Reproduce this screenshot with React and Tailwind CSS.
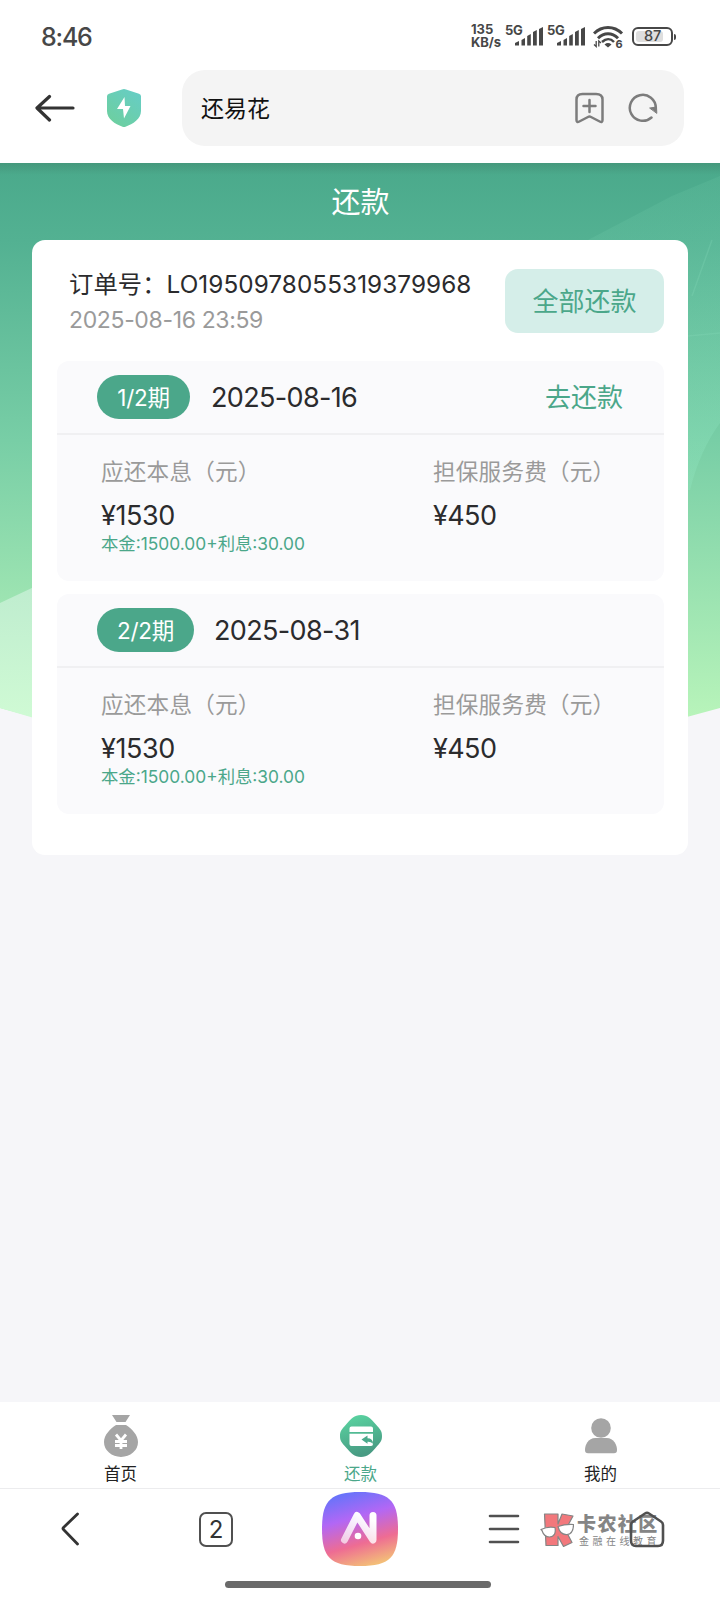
import { useState } from "react";

const periods = [
    { id: 1, label: "1/2期", date: "2025-08-16", canPay: true, amount: "1530", fee: "450", detail: "本金:1500.00+利息:30.00" },
    { id: 2, label: "2/2期", date: "2025-08-31", canPay: false, amount: "1530", fee: "450", detail: "本金:1500.00+利息:30.00" },
];

function Signal() {
    return (
        <div className="flex h-[20px]">
            <span className="text-[13px] leading-[11px] font-bold tracking-[-0.4px] w-[17px] h-[11px] -mt-[1px]">5G</span>
            <svg width="28" height="20" viewBox="0 0 28 20" className="-ml-[7px]" fill="#474747">
                <path d="M0 19.500V17l4-2v4.500zM6.500 19.500V14l3.500-2v7.500zM12.200 19.500V10l3.600-2v11.500zM18 19.500V6l3.800-2v15.500zM24 19.500V3l4-2v18.500z" />
            </svg>
        </div>
    );
}

function StatusBar() {
    return (
        <div className="h-[70px] pl-[41px] pr-[44px] pt-[24px] flex justify-between text-[#474747]">
            <span className="text-[25px] leading-[26px] font-medium tracking-[-1.200px]">8:46</span>
            <div className="flex items-start">
                <div className="w-[33px] -mt-[1px] text-[13px] leading-[13px] font-bold">
                    <div>135</div>
                    <div className="tracking-[-0.1px]">KB/s</div>
                </div>
                <div className="ml-[1px] mt-[2px] flex gap-[4px]">
                    <Signal />
                    <Signal />
                </div>
                <svg width="32" height="28" viewBox="0 0 32 28" className="ml-[8px] mt-[1px] -mr-[2px]" fill="none" stroke="#474747" strokeWidth="3">
                    <path d="M1 8.500C9 0.500 21 0.500 29 8.500" />
                    <path d="M5 13.200C11 7.300 19 7.300 25 13.200" />
                    <path d="M9 17C13 13.300 17.500 13.300 21 17" strokeWidth="2.500" />
                    <path d="M11.500 19.500q3.500-2.800 7 0l-3.500 3z" fill="#474747" stroke="none" />
                    <path d="M3.200 16v5.500L1 19.500M5.800 21.500V16l2.200 2" strokeWidth="1.300" />
                    <text x="22.500" y="22.700" fontSize="11" fontWeight="700" fill="#474747" stroke="none">6</text>
                </svg>
                <div className="ml-[9px] mt-[3px] flex items-center">
                    <div className="relative w-[41px] h-[19px] rounded-[6px] border-2 border-[#474747] flex items-center justify-center">
                        <div className="absolute left-[2px] top-[2px] bottom-[2px] w-[27px] rounded-[3px] bg-[#dedede]"></div>
                        <span className="relative text-[14.5px] leading-none font-medium tracking-[-0.3px]">87</span>
                    </div>
                    <div className="w-[2px] h-[6px] ml-[1px] rounded-r bg-[#474747]"></div>
                </div>
            </div>
        </div>
    );
}

function AddressBar() {
    return (
        <div className="h-[93px] pl-[35px] pr-[36px] flex items-start">
            <svg width="40" height="28" viewBox="0 0 40 28" className="mt-[24px]" fill="none" stroke="#333" strokeWidth="3.200" strokeLinecap="round" strokeLinejoin="round">
                <path d="M38 14H2.500M14.500 2.500L2 14l12.500 12" />
            </svg>
            <svg width="36" height="40" viewBox="0 0 36 40" className="ml-[31px] mt-[18px]">
                <defs>
                    <linearGradient id="shield" x1="1" y1="0" x2="0.300" y2="1">
                        <stop offset="0" stopColor="#66cdc8" />
                        <stop offset="1" stopColor="#6dcfa0" />
                    </linearGradient>
                </defs>
                <path d="M16 1.400q2-.9 4 0L33 5.800q2 .7 2 2.500V23c0 8-8 13-15.500 15.700q-1.500.5-3 0C9 36 1 31 1 23V8.300q0-1.800 2-2.500z" fill="url(#shield)" />
                <path d="M18.500 9L11 21h6l1 9.500L24.500 18H19z" fill="#fff" />
            </svg>
            <div className="ml-[40px] w-[502px] h-[76px] rounded-[23px] bg-[#f4f4f4] flex items-center pl-[19px] pr-[26px]">
                <span className="grow text-[23px] leading-none text-[#111] pt-[2px]">还易花</span>
                <svg width="29" height="32" viewBox="0 0 29 32" fill="none" stroke="#7c7c7c" strokeWidth="2.500" strokeLinecap="round" strokeLinejoin="round" className="mr-[-1px]">
                    <path d="M7.500 2h13.500Q27.500 2 27.500 7.500V28q0 3-2.800 1.500L16 25q-1.500-.8-3 0L4.300 29.500Q1.500 31 1.500 28V7.500Q1.500 2 7.500 2z" />
                    <path d="M14.500 8v12M8.500 14h12" />
                </svg>
                <svg width="30" height="30" viewBox="0 0 30 30" className="ml-[25px]" fill="none" stroke="#7c7c7c" strokeWidth="2.500" strokeLinecap="round">
                    <path d="M23.500 24.500A13 13 0 1 1 27.800 15" />
                    <path d="M22 15l6.500-1 .3 6z" fill="#7c7c7c" strokeWidth="1" strokeLinejoin="round" />
                </svg>
            </div>
        </div>
    );
}

function HeroBackground() {
    return (
        <svg width="720" height="560" viewBox="0 163 720 560" className="absolute left-0 top-0">
            <defs>
                <linearGradient id="hero" gradientUnits="userSpaceOnUse" x1="0" y1="163" x2="0" y2="718">
                    <stop offset="0" stopColor="#4aa98b" />
                    <stop offset="0.140" stopColor="#53b192" />
                    <stop offset="0.500" stopColor="#78cea6" />
                    <stop offset="1" stopColor="#b8f4ba" />
                </linearGradient>
                <linearGradient id="heroLight" gradientUnits="userSpaceOnUse" x1="0" y1="590" x2="0" y2="716">
                    <stop offset="0" stopColor="#bfedcf" />
                    <stop offset="1" stopColor="#cffad4" />
                </linearGradient>
                <linearGradient id="heroGlow" gradientUnits="userSpaceOnUse" x1="640" y1="190" x2="720" y2="480">
                    <stop offset="0" stopColor="#9af0cc" stopOpacity="0.080" />
                    <stop offset="1" stopColor="#9af0cc" stopOpacity="0.220" />
                </linearGradient>
                <linearGradient id="heroShadow" x1="0" y1="0" x2="0" y2="1">
                    <stop offset="0" stopColor="#3c7a62" stopOpacity="0.350" />
                    <stop offset="1" stopColor="#3c7a62" stopOpacity="0" />
                </linearGradient>
            </defs>
            <path d="M0 163H720V708Q360 810 0 708z" fill="url(#hero)" />
            <path d="M588 240L672 196 720 176V423Q700 450 690 490H588z" fill="url(#heroGlow)" />
            <path d="M688 336L720 333M692 296L712 240" stroke="#8ee0bd" strokeOpacity="0.220" strokeWidth="1.500" />
            <path d="M0 603L34 587V718L0 708z" fill="url(#heroLight)" />
            <rect x="0" y="163" width="720" height="12" fill="url(#heroShadow)" />
        </svg>
    );
}

function PeriodCard({ period }) {
    return (
        <div className="h-[220px] rounded-[12px] bg-[#fafafc]">
            <div className="h-[74px] pl-[40px] pr-[41px] flex items-center border-b-2 border-[#f0f0f2]">
                <div className={`h-[44px] rounded-full bg-[#4ba78a] text-white text-[22.500px] leading-[45px] text-center tracking-[-0.3px] ${period.canPay ? 'w-[93px]' : 'w-[97px]'}`}>
                    {period.label}
                </div>
                <span className={`grow text-[27px] leading-none text-[#2b2b2d] tracking-[-0.65px] ${period.canPay ? 'ml-[21px]' : 'ml-[20px]'}`}>{period.date}</span>
                {period.canPay && (
                    <button className="text-[26px] leading-none text-[#4ba78a] pt-[2px]">去还款</button>
                )}
            </div>
            <div className="pl-[44px] pt-[23px] flex">
                <div className="w-[332px]">
                    <p className="text-[22.600px] leading-[28px] text-[#9a9a9a] tracking-[0.200px]">应还本息（元）</p>
                    <p className="mt-[14px] text-[27px] leading-[32px] text-[#2b2b2d] tracking-[-0.400px]">¥{period.amount}</p>
                    <p className="mt-[2px] text-[17.350px] leading-[20px] text-[#4ba78a] whitespace-nowrap">{period.detail}</p>
                </div>
                <div>
                    <p className="text-[22.600px] leading-[28px] text-[#9a9a9a] tracking-[0.200px]">担保服务费（元）</p>
                    <p className="mt-[14px] text-[27px] leading-[32px] text-[#2b2b2d] tracking-[-0.6px]">¥{period.fee}</p>
                </div>
            </div>
        </div>
    );
}

function BagIcon() {
    return (
        <svg width="34" height="42" viewBox="0 0 34 42" className="relative left-[1px]">
            <path d="M8 0h18l-4.500 7h-9zM12 10h10c6 4 12 10 12 17a17 15 0 0 1-34 0c0-7 6-13 12-17z" fill="#a5a5a5" />
            <path d="M12 19.500l5 6 5-6M11 26.500h12M11 30.500h12M17 25.500v8.500" fill="none" stroke="#fff" strokeWidth="2.800" />
        </svg>
    );
}

function RepayIcon() {
    return (
        <svg width="42" height="42" viewBox="0 0 42 42" className="relative left-[0.5px]">
            <defs>
                <linearGradient id="repay" x1="0" y1="0" x2="0.300" y2="1">
                    <stop offset="0" stopColor="#5bd8a3" />
                    <stop offset="1" stopColor="#489b83" />
                </linearGradient>
            </defs>
            <path d="M21 0C28 0 30.500 3.500 35.500 9S42 16 42 21s-1.500 6.500-6.500 12S28 42 21 42 11.500 38.500 6.500 33 0 26 0 21s1.500-6.500 6.500-12S14 0 21 0z" fill="url(#repay)" />
            <path d="M11.500 11.500h19.500q2 0 2 2V17H9.500v-3.500q0-2 2-2zM9.500 18.700H33V29q0 2-2 2H11.500q-2 0-2-2z" fill="#fff" />
            <path d="M21.500 24.500l6-4v2.700q5.500 0 5.500 5.500-2-2.200-5.500-2v2z" fill="#4baa8b" />
        </svg>
    );
}

function UserIcon() {
    return (
        <svg width="34" height="42" viewBox="0 0 34 42" fill="#a5a5a5" className="relative left-[1px]">
            <circle cx="17" cy="13" r="9.800" />
            <path d="M11.500 23h11C30 23 33 30 33 35q0 3.200-3 3.200H4q-3 0-3-3.200C1 30 4 23 11.500 23z" />
        </svg>
    );
}

function Watermark() {
    return (
        <div className="absolute left-[540px] top-[23px] flex">
            <svg width="34" height="36" viewBox="0 0 34 36" stroke="#858585" strokeWidth="1.200" strokeLinejoin="round">
                <path d="M4.500 2h13.500v10L22 2l11 2-7.500 14 6.500 12.500-8.500 4-5.500-10v9h-12z" fill="#f2787c" />
                <path d="M1 17.500q7-3.500 14-2 1.500 9-5.500 9.500Q4 25 2 18.500zM18 14.500Q25 12 33.500 12.500q0 9.500-6.500 10-7 .5-9-8z" fill="#fff" />
            </svg>
            <div className="ml-[3px] mt-[2px] whitespace-nowrap text-[#858585]">
                <p className="text-[19px] leading-[22px] font-black tracking-[1.400px]">卡农社区</p>
                <p className="ml-[2px] text-[10px] leading-[11px] tracking-[3.500px]">金融在线教育</p>
            </div>
        </div>
    );
}

function BrowserNav() {
    return (
        <div className="relative h-[112px] border-t border-[#ececee] bg-white">
            <div className="h-[80px] pl-[61px] pt-[3px] flex items-start">
                <svg width="19" height="34" viewBox="0 0 19 34" className="shrink-0 mt-[20px]" fill="none" stroke="#333" strokeWidth="2.800" strokeLinecap="round" strokeLinejoin="round">
                    <path d="M16.500 2L2.500 15.500q-1 1 0 2L16.500 32" />
                </svg>
                <div className="shrink-0 ml-[119px] mt-[20px] w-[34px] h-[35px] rounded-[7px] border-2 border-[#505050] text-[24px] leading-[31px] text-center text-[#333]">2</div>
                <svg width="76" height="74" viewBox="0 0 76 74" className="shrink-0 ml-[89px]">
                    <defs>
                        <linearGradient id="ai" x1="0.300" y1="0" x2="0.600" y2="1">
                            <stop offset="0" stopColor="#6474fa" />
                            <stop offset="0.350" stopColor="#b267f5" />
                            <stop offset="0.700" stopColor="#ee6c93" />
                            <stop offset="1" stopColor="#f3bd78" />
                        </linearGradient>
                        <linearGradient id="aiStroke" gradientUnits="userSpaceOnUse" x1="20" y1="50" x2="36" y2="20">
                            <stop offset="0" stopColor="#fff" stopOpacity="0.650" />
                            <stop offset="1" stopColor="#fff" />
                        </linearGradient>
                    </defs>
                    <path d="M38 0C68 0 76 9 76 37S68 74 38 74 0 65 0 37 8 0 38 0z" fill="url(#ai)" />
                    <path d="M22.500 48L35 23.500 51 48V23.500" fill="none" stroke="url(#aiStroke)" strokeWidth="7" strokeLinecap="round" strokeLinejoin="round" />
                    <circle cx="36" cy="44" r="3.300" fill="#fff" />
                </svg>
                <svg width="32" height="30" viewBox="0 0 32 30" className="shrink-0 ml-[90px] mt-[22px]" stroke="#505050" strokeWidth="2.600" strokeLinecap="round">
                    <path d="M2 2h28M2 15h28M2 28h28" />
                </svg>
                <svg width="36" height="37" viewBox="0 0 36 37" className="shrink-0 relative z-10 ml-[109px] mt-[19px]" fill="none" stroke="#505050" strokeWidth="2.600" strokeLinejoin="round">
                    <path d="M16 2.500q2-1.300 4 0L32 10.500q2 1.300 2 3.500v15.500q0 5.500-5 5.500H7q-5 0-5-5.500V14q0-2.200 2-3.500z" />
                </svg>
            </div>
            <Watermark />
            <div className="mx-auto mt-[12px] w-[266px] h-[7px] rounded-full bg-[#6a6a6a] relative -left-[2px]"></div>
        </div>
    );
}

function App() {
    const [tab, setTab] = useState("repay");

    const tabs = [
        { key: "home", name: "首页", icon: <BagIcon /> },
        { key: "repay", name: "还款", icon: <RepayIcon /> },
        { key: "mine", name: "我的", icon: <UserIcon /> },
    ];

    return (
        <div className="w-[720px] h-[1600px] overflow-hidden flex flex-col bg-white font-['Inter','Noto_Sans_CJK_SC',sans-serif]">
            <StatusBar />
            <AddressBar />

            <div className="relative grow bg-[#f6f6f9]">
                <HeroBackground />
                <div className="relative px-[32px]">
                    <h1 className="h-[77px] pl-[1px] text-center text-[29px] leading-[79px] text-white">还款</h1>

                    <div className="h-[615px] rounded-[13px] bg-white pl-[25px] pr-[24px]">
                        <div className="h-[121px] pl-[12px] pt-[29px] flex justify-between items-start">
                            <div className="whitespace-nowrap">
                                <p className="text-[24.300px] leading-[31px] text-[#2b2b2d] tracking-[0.080px]">订单号：LO1950978055319379968</p>
                                <p className="mt-[4px] text-[23px] leading-[32px] text-[#9a9a9a] tracking-[-0.350px]">2025-08-16 23:59</p>
                            </div>
                            <button className="w-[159px] h-[64px] rounded-[13px] bg-[#d5eee9] text-[26px] leading-[66px] text-[#4ba78a]">全部还款</button>
                        </div>
                        <div className="space-y-[13px]">
                            {periods.map((period) => (
                                <PeriodCard key={period.id} period={period} />
                            ))}
                        </div>
                    </div>
                </div>
            </div>

            <div className="h-[86px] pt-[13px] grid grid-cols-3 bg-white">
                {tabs.map((item) => (
                    <button key={item.key} onClick={() => setTab(item.key)} className="flex flex-col items-center">
                        {item.icon}
                        <span className={`mt-[7px] pl-[1px] text-[16.500px] leading-[20px] ${tab === item.key ? 'text-[#4ba78a]' : 'text-[#222]'}`}>{item.name}</span>
                    </button>
                ))}
            </div>

            <BrowserNav />
        </div>
    );
}

export default App;
